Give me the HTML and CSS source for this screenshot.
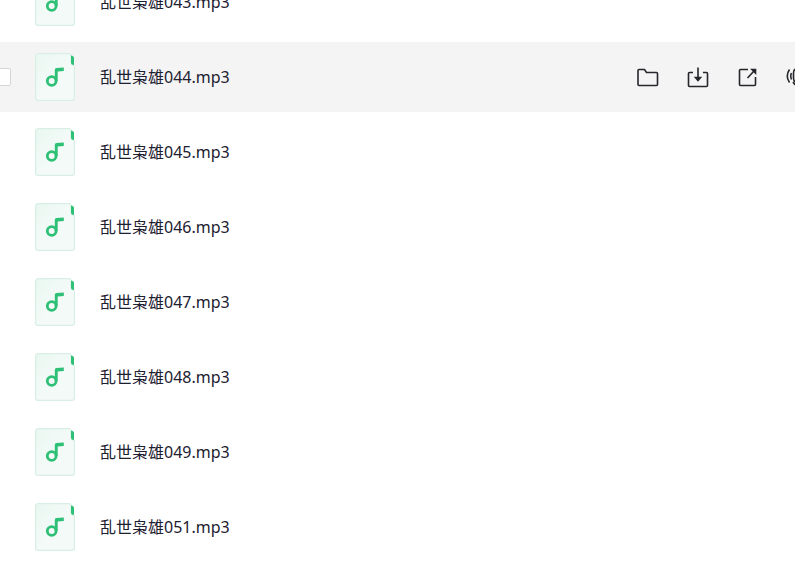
FILE: index.html
```html
<!DOCTYPE html>
<html lang="zh-CN">
<head>
    <meta charset="utf-8">
    <title>乱世枭雄</title>
    <link rel="stylesheet" href="styles.css">
</head>
<body>
    <svg class="sprite" aria-hidden="true">
        <defs>
            <linearGradient id="paper" x1="0" y1="0" x2="1" y2="1">
                <stop offset="0" stop-color="#e9f7f1"/>
                <stop offset=".5" stop-color="#f3faf7"/>
                <stop offset="1" stop-color="#f4faf8"/>
            </linearGradient>
        </defs>
        <symbol id="audio-file" viewBox="0 0 40 48">
            <path d="M3 .6H34Q36 .6 36 3V9Q36 12 39.400 12.500V45a2.400 2.400 0 0 1-2.400 2.400H3A2.400 2.400 0 0 1 .6 45V3A2.400 2.400 0 0 1 3 .6Z" fill="url(#paper)" stroke="#d9efe6" stroke-width="1.200"/>
            <path d="M36 2.500Q39 3 39 5V12Q36 12 36 9.500Z" fill="#2fc077"/>
            <circle cx="16.700" cy="28" r="4.400" fill="none" stroke="#2fc077" stroke-width="2.800"/>
            <path d="M19.800 28V17Q19.800 15.300 21.500 15.100L28.800 14.500V17.900L22.700 18.500V28Z" fill="#2fc077"/>
        </symbol>
    </svg>

    <ul class="file-list">
        <li class="file-row">
            <input class="check" type="checkbox" aria-label="选择 043">
            <svg class="file-icon"><use href="#audio-file"/></svg>
            <a class="file-name" href="#">乱世枭雄043.mp3</a>
        </li>
        <li class="file-row active">
            <input class="check" type="checkbox" aria-label="选择 044">
            <svg class="file-icon"><use href="#audio-file"/></svg>
            <a class="file-name" href="#">乱世枭雄044.mp3</a>
            <div class="actions">
                <button type="button" aria-label="打开">
                    <svg viewBox="0 0 24 24"><path d="M2 19.500V5.500Q2 4.500 3 4.500H8.500L10.500 7.500H20.500Q21.500 7.500 21.500 8.500V19.500Q21.500 20.500 20.500 20.500H3Q2 20.500 2 19.500Z"/></svg>
                </button>
                <button type="button" aria-label="下载">
                    <svg viewBox="0 0 24 24"><path d="M7 7.500H3.500Q2.500 7.500 2.500 8.500V20.500Q2.500 21.500 3.500 21.500H20.500Q21.500 21.500 21.500 20.500V8.500Q21.500 7.500 20.500 7.500H17M12 2.500V13"/><path class="solid" d="M9.500 12.500H14.500L12 15.500Z"/></svg>
                </button>
                <button type="button" aria-label="分享">
                    <svg viewBox="0 0 24 24"><path d="M12 4.500H4.500Q3.500 4.500 3.500 5.500V19.500Q3.500 20.500 4.500 20.500H18.500Q19.500 20.500 19.500 19.500V12M11.500 13L18 6"/><path class="solid" d="M16 4.500H19.500V8Z"/></svg>
                </button>
                <button type="button" aria-label="播放">
                    <svg viewBox="0 0 24 24"><path d="M3.500 4.500Q-1 11 3.500 17.500M5.500 8Q4 11 5.500 14.500M12 3.500Q7.500 3.500 7.500 8V13Q7.500 17.500 12 17.500Q16 17.500 16 13V8Q16 3.500 12 3.500M7 17Q9 20.500 12 20.500"/></svg>
                </button>
            </div>
        </li>
        <li class="file-row">
            <input class="check" type="checkbox" aria-label="选择 045">
            <svg class="file-icon"><use href="#audio-file"/></svg>
            <a class="file-name" href="#">乱世枭雄045.mp3</a>
        </li>
        <li class="file-row">
            <input class="check" type="checkbox" aria-label="选择 046">
            <svg class="file-icon"><use href="#audio-file"/></svg>
            <a class="file-name" href="#">乱世枭雄046.mp3</a>
        </li>
        <li class="file-row">
            <input class="check" type="checkbox" aria-label="选择 047">
            <svg class="file-icon"><use href="#audio-file"/></svg>
            <a class="file-name" href="#">乱世枭雄047.mp3</a>
        </li>
        <li class="file-row">
            <input class="check" type="checkbox" aria-label="选择 048">
            <svg class="file-icon"><use href="#audio-file"/></svg>
            <a class="file-name" href="#">乱世枭雄048.mp3</a>
        </li>
        <li class="file-row">
            <input class="check" type="checkbox" aria-label="选择 049">
            <svg class="file-icon"><use href="#audio-file"/></svg>
            <a class="file-name" href="#">乱世枭雄049.mp3</a>
        </li>
        <li class="file-row">
            <input class="check" type="checkbox" aria-label="选择 051">
            <svg class="file-icon"><use href="#audio-file"/></svg>
            <a class="file-name" href="#">乱世枭雄051.mp3</a>
        </li>
    </ul>
</body>
</html>
```
FILE: styles.css
```css
body {
    margin: 0;
    overflow: hidden;
    background: #fff;
    color: #1c2030;
    font-family: "Noto Sans", "Noto Sans CJK SC", sans-serif;
    font-size: 16px;
}
.sprite {
    position: absolute;
    width: 0;
    height: 0;
}
/* list is scrolled part way through its first row */
.file-list {
    display: flex;
    flex-direction: column;
    gap: 5px;
    margin: -33px -15px 0 -7px;
    padding: 0;
    list-style: none;
}
.file-row {
    display: flex;
    align-items: center;
    gap: 24px;
    height: 70px;
}
.file-row.active {
    background: #f4f4f4;
}
.check {
    appearance: none;
    box-sizing: border-box;
    width: 18px;
    height: 18px;
    margin: 0;
    border: 1px solid #d4d5d8;
    border-radius: 2px;
    background: #fff;
    visibility: hidden;
}
.active .check {
    visibility: visible;
}
.file-icon {
    flex: none;
    width: 40px;
    height: 48px;
}
.file-name {
    flex: 1;
    padding-left: 1px;
    color: inherit;
    line-height: 24px;
    text-decoration: none;
}
.actions {
    display: flex;
    gap: 26px;
}
.actions button {
    width: 24px;
    height: 24px;
    padding: 0;
    border: 0;
    background: none;
    color: #25262b;
}
.actions svg {
    display: block;
    width: 24px;
    height: 24px;
    fill: none;
    stroke: currentColor;
    stroke-width: 1.6;
}
.actions .solid {
    fill: currentColor;
}
```
